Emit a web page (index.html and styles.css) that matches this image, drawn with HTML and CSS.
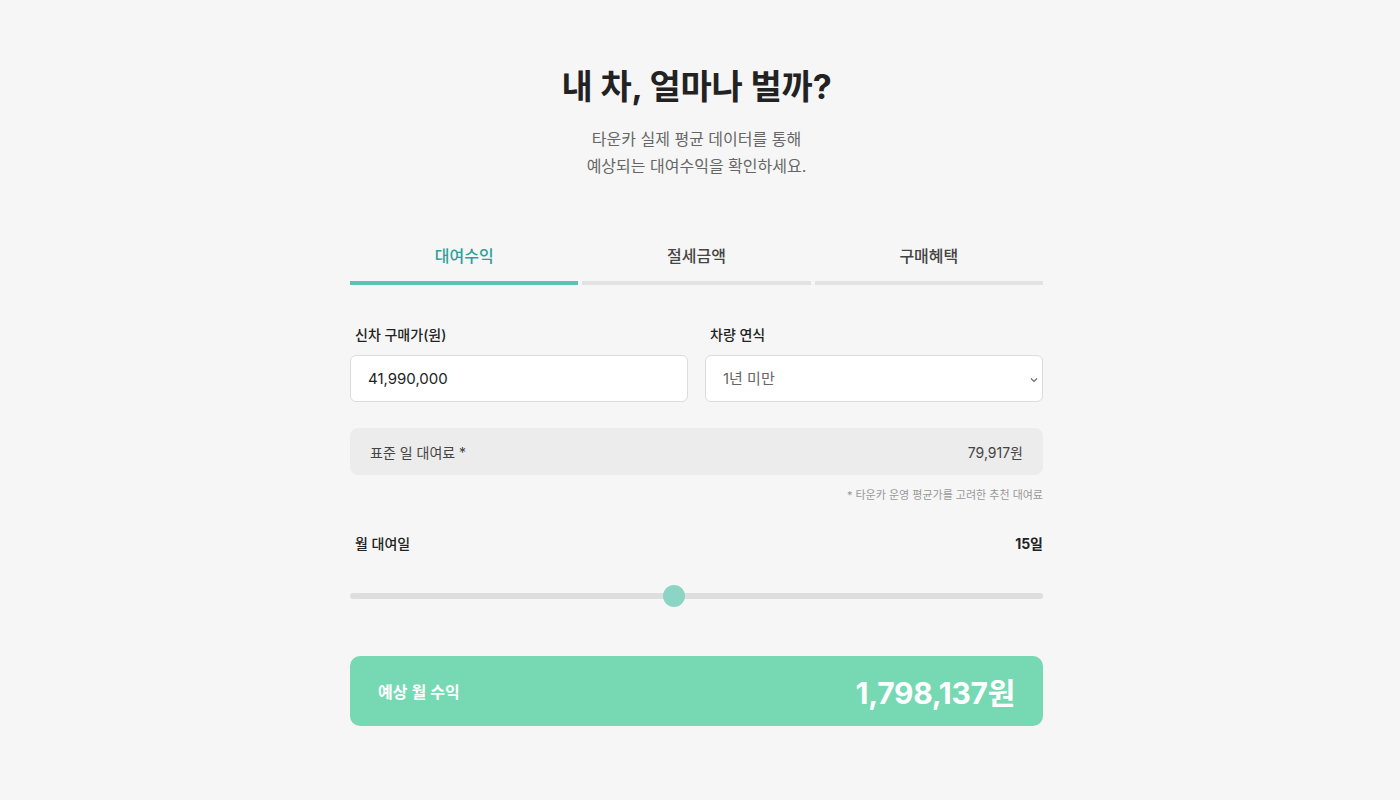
FILE: index.html
```html
<!DOCTYPE html>
<html lang="ko">
<head>
<meta charset="utf-8">
<title>내 차, 얼마나 벌까?</title>
<link rel="stylesheet" href="styles.css">
</head>
<body>
<main class="calc">
  <h1 class="title">내 차, 얼마나 벌까?</h1>
  <p class="subtitle">타운카 실제 평균 데이터를 통해<br>예상되는 대여수익을 확인하세요.</p>

  <nav class="tabs">
    <button class="tab active">대여수익</button>
    <button class="tab">절세금액</button>
    <button class="tab">구매혜택</button>
  </nav>

  <div class="fields">
    <div class="field">
      <label class="label">신차 구매가(원)</label>
      <input class="input" type="text" value="41,990,000">
    </div>
    <div class="field">
      <label class="label">차량 연식</label>
      <div class="select-wrap">
        <select class="input select">
          <option>1년 미만</option>
        </select>
        <svg class="chev" width="8" height="6" viewBox="0 0 8 6"><path d="M1 1.5 L4 4.5 L7 1.5" fill="none" stroke="#666" stroke-width="1.1"/></svg>
      </div>
    </div>
  </div>

  <div class="rate">
    <span>표준 일 대여료 *</span>
    <span>79,917원</span>
  </div>
  <p class="note">* 타운카 운영 평균가를 고려한 추천 대여료</p>

  <div class="days-head">
    <span class="label">월 대여일</span>
    <span class="days-val">15일</span>
  </div>
  <input class="range" type="range" min="1" max="31" value="15">

  <div class="result">
    <span class="result-label">예상 월 수익</span>
    <span class="result-val">1,798,137원</span>
  </div>
</main>
</body>
</html>
```

FILE: styles.css
```css
* { box-sizing: border-box; }
html, body { margin: 0; padding: 0; }
body {
  background: #f6f6f6;
  font-family: Inter, "Noto Sans CJK KR", sans-serif;
  color: #222;
}
.calc {
  width: 700px;
  margin: 0 auto;
  padding: 66px 7px 0 0;
}
.title {
  margin: 0;
  font-size: 34px;
  line-height: 42px;
  font-weight: 700;
  text-align: center;
  color: #222;
  letter-spacing: -0.2px;
}
.subtitle {
  margin: 18px 0 0;
  font-size: 16px;
  line-height: 27px;
  text-align: center;
  color: #666;
}
.tabs {
  margin-top: 66px;
  display: flex;
  gap: 4px;
}
.tab {
  flex: 1;
  background: none;
  border: none;
  border-bottom: 4px solid #e2e2e2;
  padding: 0 0 15px;
  font-family: inherit;
  font-size: 16px;
  line-height: 20px;
  font-weight: 500;
  color: #444;
  cursor: pointer;
}
.tab.active {
  color: #2f9f97;
  border-bottom-color: #5fc1b2;
}
.fields {
  margin-top: 40px;
  display: flex;
  gap: 17px;
}
.field { flex: 1; display: flex; flex-direction: column; }
.label {
  font-size: 14px;
  line-height: 20px;
  font-weight: 500;
  color: #222;
  padding-left: 5px;
}
.input {
  margin-top: 10px;
  height: 47px;
  width: 100%;
  border: 1px solid #dcdcdc;
  border-radius: 6px;
  background: #fff;
  font-family: inherit;
  font-size: 15px;
  color: #222;
  padding: 0 17px;
  outline: none;
}
.select-wrap { position: relative; }
.select {
  appearance: none;
  -webkit-appearance: none;
  color: #666;
}
.chev {
  position: absolute;
  right: 5px;
  top: 32px;
}
.rate {
  margin-top: 26px;
  height: 47px;
  background: #ececec;
  border-radius: 8px;
  display: flex;
  align-items: center;
  justify-content: space-between;
  padding: 0 20px;
  font-size: 14px;
  color: #444;
}
.note {
  margin: 12px 0 0;
  font-size: 11px;
  line-height: 16px;
  text-align: right;
  color: #999;
}
.days-head {
  margin-top: 31px;
  display: flex;
  justify-content: space-between;
  font-size: 14px;
  line-height: 20px;
}
.days-val { font-weight: 700; color: #222; }
.range {
  -webkit-appearance: none;
  appearance: none;
  display: block;
  width: 100%;
  height: 22px;
  margin: 31px 0 0;
  background: transparent;
}
.range::-webkit-slider-runnable-track {
  height: 6px;
  background: #dedede;
  border-radius: 3px;
}
.range::-webkit-slider-thumb {
  -webkit-appearance: none;
  width: 22px;
  height: 22px;
  border-radius: 50%;
  background: #8cd5c4;
  margin-top: -8px;
  border: none;
}
.result {
  margin-top: 49px;
  height: 70px;
  background: #77d9b3;
  border-radius: 10px;
  display: flex;
  align-items: center;
  justify-content: space-between;
  padding: 0 28px;
  color: #fff;
}
.result-label { font-size: 16px; font-weight: 600; }
.result-val { font-size: 30px; font-weight: 700; letter-spacing: -0.3px; }
```
